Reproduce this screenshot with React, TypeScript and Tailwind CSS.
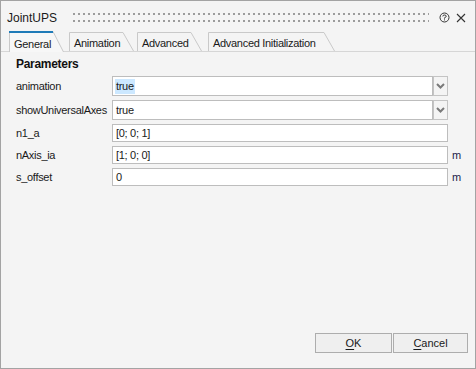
import React from 'react';

const font = { fontFamily: '"Liberation Sans", Arial, sans-serif' };

type TabDef = { label: string; width: number; gap: number; active?: boolean };

const tabs: TabDef[] = [
  { label: 'General', width: 55, gap: 0, active: true },
  { label: 'Animation', width: 65, gap: 5 },
  { label: 'Advanced', width: 65, gap: 3 },
  { label: 'Advanced Initialization', width: 127, gap: 6 },
];

function Tab({ label, width, gap, active }: TabDef) {
  const h = active ? 21 : 19;
  const slant = 11;
  return (
    <div
      className={active ? 'relative z-10 h-[21px] mb-[-1px]' : 'relative h-[19px]'}
      style={{ width, marginLeft: gap }}
    >
      <svg className="absolute inset-0" width={width} height={h}>
        <path
          d={`M0.5 ${h} V0.5 H${width - slant} L${width - 0.5} ${h}`}
          fill={active ? '#f7f7f7' : '#f4f4f4'}
          stroke="#c9c9c9"
        />
        {active && <rect x={0} y={0} width={width - slant} height={2} fill="#1f7bb8" />}
      </svg>
      <span
        className={`relative block pl-[5px] text-[11px] tracking-[-0.3px] text-[#1a1a1a] ${
          active ? 'pt-[5px]' : 'pt-[3px]'
        }`}
      >
        {label}
      </span>
    </div>
  );
}

function Chevron() {
  return (
    <svg width="9" height="6" viewBox="0 0 9 6">
      <polyline points="1,1 4.5,4.5 8,1" fill="none" stroke="#7a7a7a" strokeWidth="2" />
    </svg>
  );
}

function SelectRow({ label, value, selected }: { label: string; value: string; selected?: boolean }) {
  return (
    <div className="flex items-center h-[20px]">
      <div className="w-[96px] text-[11px] tracking-[-0.3px] text-[#1a1a1a]">{label}</div>
      <div className="flex h-[20px]">
        <div className="w-[321px] h-full bg-white border border-[#bdbdbd] flex items-center pl-[2px]">
          <span
            className={`text-[11px] tracking-[-0.3px] text-[#1a1a1a] px-[1px] leading-[15px] ${
              selected ? 'bg-[#cce8ff]' : ''
            }`}
          >
            {value}
          </span>
        </div>
        <div className="w-[15px] h-full border border-[#c4c4c4] bg-[#f4f4f4] flex items-center justify-center">
          <Chevron />
        </div>
      </div>
    </div>
  );
}

function TextRow({ label, value, unit }: { label: string; value: string; unit?: string }) {
  return (
    <div className="flex items-center h-[18px]">
      <div className="w-[96px] text-[11px] tracking-[-0.3px] text-[#1a1a1a]">{label}</div>
      <div className="w-[336px] h-full bg-white border border-[#bdbdbd] flex items-center pl-[3px] text-[11px] tracking-[-0.3px] text-[#1a1a1a]">
        {value}
      </div>
      {unit && <div className="ml-[4px] text-[11px] text-[#1c1c4a]">{unit}</div>}
    </div>
  );
}

export default function App() {
  return (
    <div
      className="w-[476px] h-[369px] border border-[#a3a3a3] bg-[#f4f4f4] flex flex-col"
      style={font}
    >
      {/* title bar */}
      <div className="h-[30px] flex items-center pl-[6px] pr-[9px] pt-[3px]">
        <span className="text-[12px] text-[#1a1a1a]">JointUPS</span>
        <svg className="ml-[16px] flex-1 h-[10px]" height="10">
          <defs>
            <pattern id="grip" width="5" height="7" patternUnits="userSpaceOnUse">
              <rect x="0" y="0" width="2" height="2" fill="#9c9c9c" />
            </pattern>
          </defs>
          <rect x="0" y="0" width="100%" height="9" fill="url(#grip)" />
        </svg>
        <svg className="ml-[10px]" width="11" height="11" viewBox="0 0 11 11">
          <circle cx="5.5" cy="5.5" r="4.5" fill="none" stroke="#333" strokeWidth="1" />
          <path d="M3.8 4.4 Q3.8 3 5.5 3 Q7.2 3 7.2 4.3 Q7.2 5.2 5.5 5.8 V6.6" fill="none" stroke="#333" strokeWidth="1" />
          <rect x="5" y="7.4" width="1" height="1" fill="#333" />
        </svg>
        <svg className="ml-[6px]" width="10" height="10" viewBox="0 0 10 10">
          <path d="M1 1 L9 9 M9 1 L1 9" stroke="#333" strokeWidth="1.1" />
        </svg>
      </div>

      {/* tabs */}
      <div className="flex items-end pl-[8px] border-b border-[#d6d6d6]">
        {tabs.map((t) => (
          <Tab key={t.label} {...t} />
        ))}
      </div>

      {/* content */}
      <div className="flex-1 pl-[15px] pt-[5px] flex flex-col gap-[4px]">
        <div className="text-[12px] font-bold tracking-[-0.3px] leading-[15px] text-[#111]">Parameters</div>
        <SelectRow label="animation" value="true" selected />
        <SelectRow label="showUniversalAxes" value="true" />
        <TextRow label="n1_a" value="[0; 0; 1]" />
        <TextRow label="nAxis_ia" value="[1; 0; 0]" unit="m" />
        <TextRow label="s_offset" value="0" unit="m" />
      </div>

      {/* footer buttons */}
      <div className="flex justify-end gap-[1px] pr-[7px] pb-[15px]">
        <button className="w-[77px] h-[20px] border border-[#adadad] bg-[#efefef] text-[11px] text-[#1a1a1a]">
          <span className="underline underline-offset-2">O</span>K
        </button>
        <button className="w-[75px] h-[20px] border border-[#adadad] bg-[#efefef] text-[11px] text-[#1a1a1a]">
          <span className="underline underline-offset-2">C</span>ancel
        </button>
      </div>
    </div>
  );
}
